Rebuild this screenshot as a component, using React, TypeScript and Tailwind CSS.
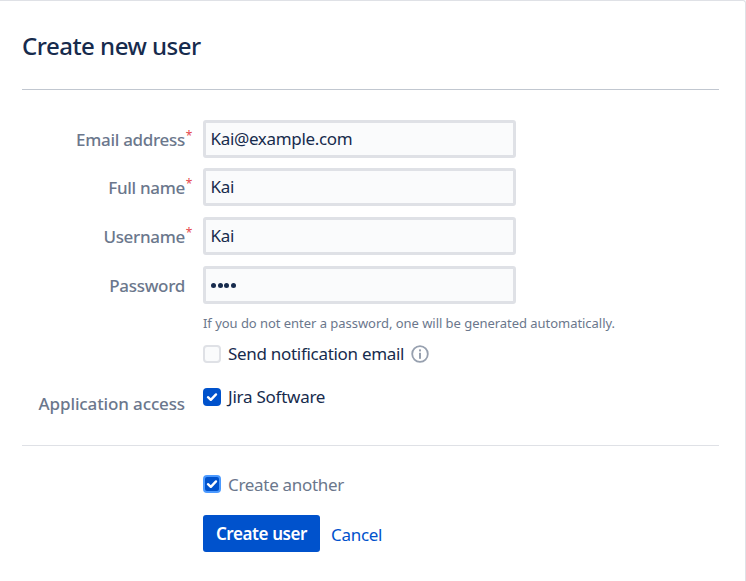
import React from "react";

const font = { fontFamily: '"Noto Sans", sans-serif' };

function Field({ label, value, required, gap }: { label: string; value: string; required?: boolean; gap: string }) {
  return (
    <div className={`flex items-center h-[38px] ${gap}`}>
      <div className="w-[163px] flex justify-end text-[17px] font-medium text-[#6b778c] leading-[20px] tracking-[-0.3px] relative top-[1px]">
        {label}
        {required && <span className="absolute right-[-7px] top-[-4px] text-[#e5484d] text-[12px] font-normal">*</span>}
      </div>
      <div className="ml-[18px] w-[313px] h-[38px] border-[3px] border-[#dfe1e6] rounded-[3px] bg-[#fafbfc] flex items-center pl-[4.5px] text-[17px] text-[#172b4d] tracking-[-0.33px]">
        {value}
      </div>
    </div>
  );
}

function Check({ checked, dim }: { checked?: boolean; dim?: boolean }) {
  if (!checked)
    return <div className="w-[18px] h-[18px] border-[2px] border-[#dfe1e6] rounded-[4px] bg-[#fafbfc] shrink-0" />;
  return (
    <div className={`w-[18px] h-[18px] rounded-[4px] bg-[#0052cc] shrink-0 flex items-center justify-center ${dim ? "border-[2px] border-[#4c9aff]" : ""}`}>
      <svg width="12" height="10" viewBox="0 0 12 10" fill="none" className="shrink-0">
        <path d="M2 5.2 L4.8 7.8 L10 2.4" stroke="white" strokeWidth="2.4" strokeLinecap="round" strokeLinejoin="round" />
      </svg>
    </div>
  );
}

export default function App() {
  return (
    <div className="w-[746px] h-[581px] bg-white border-t border-r border-[#dfe1e6] rounded-tr-[3px] overflow-hidden px-[22px]" style={font}>
      <div className="h-[89px] border-b border-[#c1c7d0] pt-[28px] w-[697px]">
        <h1 className="text-[24px] leading-[34px] font-medium text-[#172b4d] tracking-[-0.5px]">Create new user</h1>
      </div>
      <div className="pt-[30px]">
        <Field label="Email address" value="Kai@example.com" required gap="mb-[10px]" />
        <Field label="Full name" value="Kai" required gap="mb-[11px]" />
        <Field label="Username" value="Kai" required gap="mb-[11px]" />
        <div className="flex items-center h-[38px]">
          <div className="w-[163px] flex justify-end text-[17px] font-medium text-[#6b778c] leading-[20px] tracking-[-0.3px] relative top-[1px]">Password</div>
          <div className="ml-[18px] w-[313px] h-[38px] border-[3px] border-[#dfe1e6] rounded-[3px] bg-[#fafbfc] flex items-center pl-[5px] gap-[1.6px]">
            {[0, 1, 2, 3].map((i) => (
              <span key={i} className="w-[5px] h-[5px] rounded-full bg-[#172b4d]" />
            ))}
          </div>
        </div>
        <div className="ml-[181px] mt-[11px] text-[13px] leading-[16px] text-[#6b778c] tracking-[-0.04px]">
          If you do not enter a password, one will be generated automatically.
        </div>
        <div className="ml-[181px] mt-[11px] flex items-center h-[24px] text-[17px] text-[#172b4d] tracking-[-0.3px]">
          <Check />
          <span className="ml-[7px]">Send notification email</span>
          <svg className="ml-[6px]" width="20" height="20" viewBox="0 0 20 20" fill="none">
            <circle cx="10" cy="10" r="7.8" stroke="#97a0af" strokeWidth="1.8" />
            <rect x="9" y="8.8" width="2" height="6" fill="#97a0af" />
            <rect x="9" y="5.4" width="2" height="2" fill="#97a0af" />
          </svg>
        </div>
        <div className="flex items-center mt-[19px] h-[24px]">
          <div className="w-[163px] flex justify-end whitespace-nowrap text-[17px] font-medium text-[#6b778c] tracking-[-0.13px] relative top-[7px]">Application access</div>
          <div className="ml-[18px] flex items-center text-[17px] text-[#172b4d] tracking-[-0.25px]">
            <Check checked />
            <span className="ml-[7px]">Jira Software</span>
          </div>
        </div>
      </div>
      <div className="mt-[36px] border-t border-[#dfe1e6] w-[697px]" />
      <div className="ml-[181px] mt-[26px] flex items-center h-[24px] text-[17px] text-[#6b778c] tracking-[-0.3px]">
        <Check checked dim />
        <span className="ml-[7px] relative top-[1px]">Create another</span>
      </div>
      <div className="ml-[181px] mt-[19px] flex items-center">
        <button className="w-[117px] h-[37px] rounded-[3px] bg-[#0052cc] text-white text-[17px] font-semibold tracking-[-0.4px] pt-[1px]">Create user</button>
        <a className="ml-[11px] text-[17px] text-[#0052cc] tracking-[-0.3px] relative top-[1px]">Cancel</a>
      </div>
    </div>
  );
}
